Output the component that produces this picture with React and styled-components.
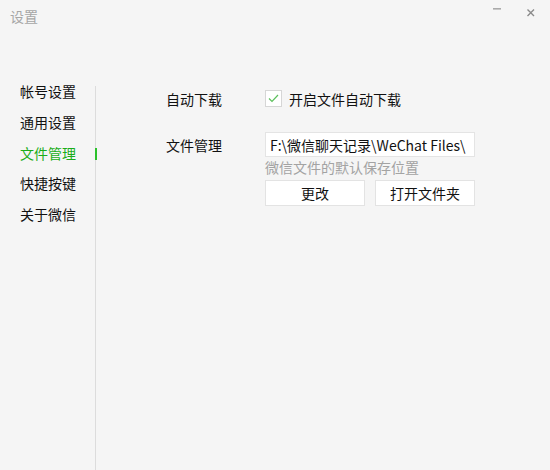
import React, { useState } from 'react';
import styled, { createGlobalStyle } from 'styled-components';

const GlobalStyle = createGlobalStyle`
  html, body {
    margin: 0;
    padding: 0;
    background: #f5f5f5;
  }
  body {
    font-family: "Noto Sans CJK SC", "Noto Sans", sans-serif;
  }
`;

const Window = styled.div`
  width: 550px;
  height: 470px;
  background: #f5f5f5;
  display: flex;
  flex-direction: column;
  overflow: hidden;
  color: #111;
  font-size: 14px;
`;

const TitleBar = styled.div`
  height: 34px;
  display: flex;
  align-items: flex-start;
  justify-content: space-between;
  padding-left: 10px;
  flex-shrink: 0;
`;

const Title = styled.div`
  line-height: 33px;
  font-size: 14px;
  color: #a6a6a6;
`;

const Controls = styled.div`
  display: flex;
  align-items: flex-start;
`;

const ControlButton = styled.div`
  width: 34px;
  height: 26px;
  display: flex;
  align-items: center;
  justify-content: center;
  margin-right: ${(p) => (p.$last ? '2px' : '0')};
`;

const Body = styled.div`
  flex: 1;
  display: flex;
  padding-top: 52px;
`;

const Sidebar = styled.nav`
  width: 95px;
  border-right: 1px solid #dcdcdc;
  flex-shrink: 0;
`;

const NavList = styled.div`
  margin-top: -2px;
`;

const NavItem = styled.div`
  position: relative;
  height: 14px;
  line-height: 14px;
  margin-bottom: 16.8px;
  padding-left: 20px;
  color: ${(p) => (p.$active ? '#1aad19' : '#111')};
  cursor: pointer;
  white-space: nowrap;

  &::after {
    content: '';
    display: ${(p) => (p.$active ? 'block' : 'none')};
    position: absolute;
    right: -2px;
    top: 2px;
    width: 2px;
    height: 12px;
    background: #2bc12b;
  }
`;

const Content = styled.div`
  padding: 3px 0 0 70px;
  display: grid;
  grid-template-columns: 99px 210px;
  row-gap: 24px;
  align-content: start;
`;

const Label = styled.div`
  line-height: ${(p) => p.$h}px;
  height: ${(p) => p.$h}px;
  padding-top: 1px;
`;

const CheckRow = styled.label`
  display: flex;
  align-items: center;
  gap: 7px;
  height: 18px;
  cursor: pointer;
`;

const CheckBox = styled.span`
  box-sizing: border-box;
  width: 17px;
  height: 17px;
  background: #fff;
  border: 1px solid #d6d6d6;
  display: flex;
  align-items: center;
  justify-content: center;
`;

const CheckText = styled.span`
  line-height: 14px;
  padding-top: 2px;
`;

const Field = styled.div`
  display: flex;
  flex-direction: column;
`;

const PathBox = styled.div`
  box-sizing: border-box;
  height: 25px;
  background: #fff;
  border: 1px solid #e4e4e4;
  padding: 0 0 0 4px;
  line-height: 24px;
  white-space: nowrap;
  overflow: hidden;
`;

const Hint = styled.div`
  color: #a3a3a3;
  line-height: 14px;
  margin-top: 3px;
`;

const ButtonRow = styled.div`
  display: flex;
  gap: 10px;
  margin-top: 6px;
`;

const Button = styled.button`
  box-sizing: border-box;
  width: 100px;
  height: 26px;
  background: #fff;
  border: 1px solid #e3e3e3;
  font-family: inherit;
  font-size: 14px;
  color: #111;
  padding: 0;
  cursor: pointer;

  &:hover {
    background: #f0f0f0;
  }
`;

const navItems = ['帐号设置', '通用设置', '文件管理', '快捷按键', '关于微信'];

export default function App() {
  const [active, setActive] = useState(2);
  const [autoDownload, setAutoDownload] = useState(true);

  return (
    <Window>
      <GlobalStyle />
      <TitleBar>
        <Title>设置</Title>
        <Controls>
          <ControlButton>
            <svg width="10" height="10" viewBox="0 0 10 10">
              <rect x="1" y="0" width="8" height="1.6" fill="#aaa" />
            </svg>
          </ControlButton>
          <ControlButton $last>
            <svg width="10" height="10" viewBox="0 0 10 10">
              <path d="M1.5 1.5 L8 8 M8 1.5 L1.5 8" stroke="#8a8a8a" strokeWidth="1.4" />
            </svg>
          </ControlButton>
        </Controls>
      </TitleBar>

      <Body>
        <Sidebar>
          <NavList>
            {navItems.map((item, i) => (
              <NavItem key={item} $active={i === active} onClick={() => setActive(i)}>
                {item}
              </NavItem>
            ))}
          </NavList>
        </Sidebar>

        <Content>
          <Label $h={18}>自动下载</Label>
          <CheckRow onClick={() => setAutoDownload(!autoDownload)}>
            <CheckBox>
              {autoDownload && (
                <svg width="11" height="9" viewBox="0 0 11 9">
                  <path d="M1 4.5 L4 7.5 L10 1" fill="none" stroke="#5cc05c" strokeWidth="1.2" />
                </svg>
              )}
            </CheckBox>
            <CheckText>开启文件自动下载</CheckText>
          </CheckRow>

          <Label $h={25}>文件管理</Label>
          <Field>
            <PathBox>F:\微信聊天记录\WeChat Files\</PathBox>
            <Hint>微信文件的默认保存位置</Hint>
            <ButtonRow>
              <Button>更改</Button>
              <Button>打开文件夹</Button>
            </ButtonRow>
          </Field>
        </Content>
      </Body>
    </Window>
  );
}
